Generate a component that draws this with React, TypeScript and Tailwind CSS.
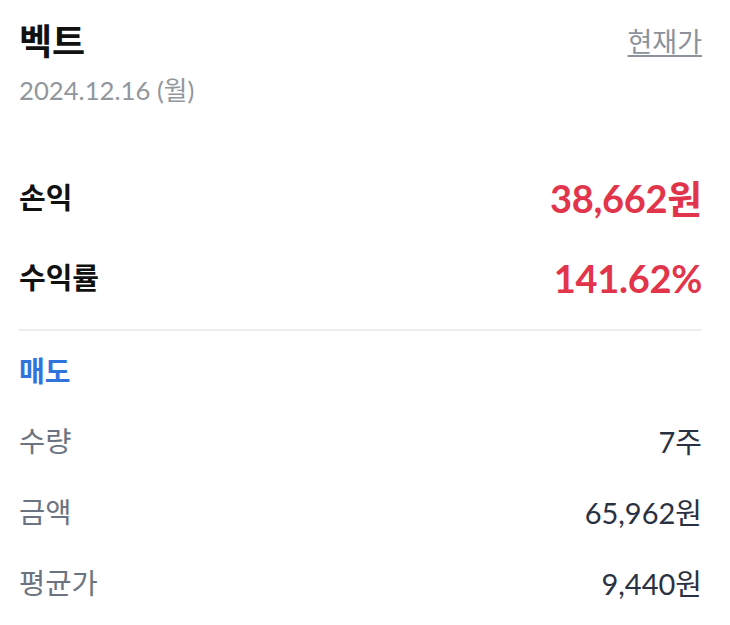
const font = { fontFamily: 'Lato, "Noto Sans CJK KR", sans-serif' };

const summary = [
  { label: '손익', value: '38,662원' },
  { label: '수익률', value: '141.62%' },
];

const details = [
  { label: '수량', value: '7주' },
  { label: '금액', value: '65,962원' },
  { label: '평균가', value: '9,440원' },
];

export default function App() {
  return (
    <div className="w-[730px] h-[625px] bg-white pl-[19px] pr-[28px] pt-[21px]" style={font}>
      {/* Header */}
      <div className="flex items-start justify-between">
        <h1 className="text-[36px] leading-[40px] font-bold text-[#111111]">벡트</h1>
        <button className="text-[27px] leading-[42px] text-[#8b929b] underline underline-offset-[3px] decoration-[2px]">
          현재가
        </button>
      </div>
      <div className="mt-[12px] text-[25.7px] leading-[30px] text-[#92979d]">2024.12.16 (월)</div>

      {/* Profit summary */}
      <div className="mt-[53px]">
        {summary.map((row) => (
          <div key={row.label} className="flex h-[80px] items-center justify-between">
            <span className="text-[29px] font-bold text-[#111111]">{row.label}</span>
            <span className="text-[38px] font-bold tracking-[-0.3px] text-[#e2344a]">{row.value}</span>
          </div>
        ))}
      </div>

      <div className="mt-[11px] h-[2px] bg-[#eeeeee]" />

      {/* Sell details */}
      <div className="mt-[5px]">
        <div className="flex h-[70px] items-center">
          <span className="text-[28px] font-bold text-[#2f74dc]">매도</span>
        </div>
        {details.map((row) => (
          <div key={row.label} className="flex h-[71px] items-center justify-between">
            <span className="text-[28.5px] text-[#6b7480]">{row.label}</span>
            <span className="text-[29px] text-[#2a3142]">{row.value}</span>
          </div>
        ))}
      </div>
    </div>
  );
}
